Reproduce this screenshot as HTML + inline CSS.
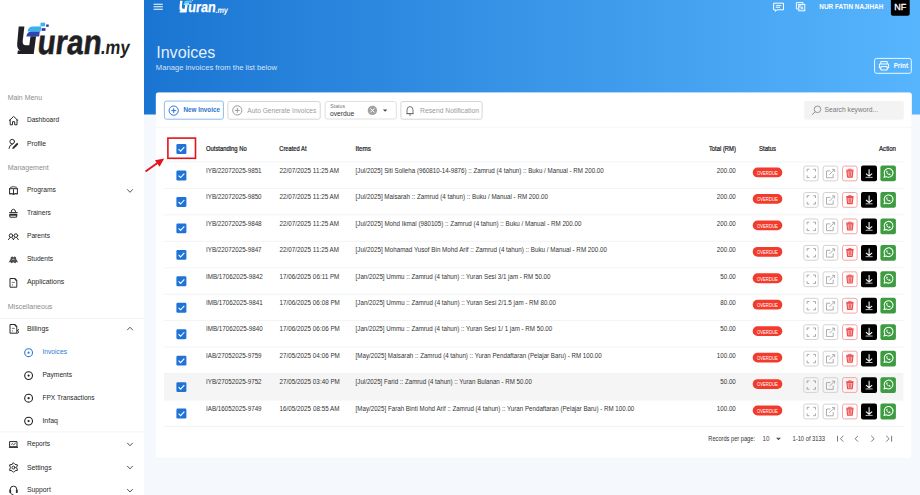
<!DOCTYPE html>
<html><head><meta charset="utf-8"><title>Invoices</title>
<style>
html,body{margin:0;padding:0}
body{width:920px;height:495px;overflow:hidden;position:relative;background:#f5f9fe;font-family:"Liberation Sans",sans-serif}
svg{position:absolute;left:0;top:0;display:block}
svg text{font-family:"Liberation Sans",sans-serif}
</style></head><body>
<svg width="920" height="495" viewBox="0 0 920 495">
<defs><linearGradient id="hg" x1="0" y1="0" x2="1" y2="0"><stop offset="0" stop-color="#1a75d2"/><stop offset="1" stop-color="#56b5fd"/></linearGradient></defs>
<rect x="0.00" y="0.00" width="144.00" height="495.00" rx="0" fill="#fff" /><rect x="144.00" y="0.00" width="776.00" height="114.50" rx="0" fill="url(#hg)" /><rect x="155.80" y="92.60" width="756.00" height="365.60" rx="2.4" fill="#f0f3f7" /><rect x="156.00" y="92.80" width="755.50" height="365.20" rx="2.2" fill="#fff" /><rect x="0.00" y="318.00" width="144.00" height="0.80" rx="0" fill="#f2f2f2" /><rect x="0.00" y="431.50" width="144.00" height="0.80" rx="0" fill="#f2f2f2" /><rect x="890.90" y="-3.00" width="18.80" height="18.80" rx="2" fill="#000" /><rect x="874.60" y="58.40" width="36.70" height="14.90" rx="2" fill="none" stroke="rgba(255,255,255,0.9)" stroke-width="1" /><rect x="164.40" y="101.10" width="59.00" height="18.10" rx="2" fill="none" stroke="#8bbcec" stroke-width="1" /><rect x="227.90" y="101.50" width="92.30" height="17.70" rx="2" fill="none" stroke="#d6d6d6" stroke-width="1" /><rect x="325.10" y="101.50" width="71.20" height="17.50" rx="2" fill="none" stroke="#e0e0e0" stroke-width="1" /><rect x="400.90" y="101.50" width="81.20" height="17.70" rx="2" fill="none" stroke="#d6d6d6" stroke-width="1" /><rect x="804.20" y="101.00" width="99.60" height="18.70" rx="2" fill="#f3f3f3" /><rect x="156.00" y="126.80" width="755.50" height="0.80" rx="0" fill="#f4f4f4" /><rect x="167.90" y="138.10" width="27.60" height="20.20" rx="0" fill="none" stroke="#e5121a" stroke-width="1.6" /><rect x="164.00" y="161.50" width="739.40" height="0.90" rx="0" fill="#f0f2f5" /><rect x="752.70" y="167.55" width="29.60" height="9.80" rx="4.9" fill="#f23b2c" /><rect x="803.80" y="166.05" width="14.40" height="14.80" rx="2" fill="none" stroke="#d3d3d3" stroke-width="1" /><rect x="823.10" y="166.05" width="14.70" height="14.80" rx="2" fill="none" stroke="#d3d3d3" stroke-width="1" /><rect x="842.50" y="166.05" width="14.60" height="14.80" rx="2" fill="none" stroke="#f6a5a5" stroke-width="1" /><rect x="861.00" y="165.55" width="16.00" height="15.80" rx="2" fill="#000" /><rect x="880.40" y="165.55" width="15.50" height="15.80" rx="2" fill="#3d9b40" /><rect x="164.00" y="187.95" width="739.40" height="0.90" rx="0" fill="#f0f2f5" /><rect x="752.70" y="194.00" width="29.60" height="9.80" rx="4.9" fill="#f23b2c" /><rect x="803.80" y="192.50" width="14.40" height="14.80" rx="2" fill="none" stroke="#d3d3d3" stroke-width="1" /><rect x="823.10" y="192.50" width="14.70" height="14.80" rx="2" fill="none" stroke="#d3d3d3" stroke-width="1" /><rect x="842.50" y="192.50" width="14.60" height="14.80" rx="2" fill="none" stroke="#f6a5a5" stroke-width="1" /><rect x="861.00" y="192.00" width="16.00" height="15.80" rx="2" fill="#000" /><rect x="880.40" y="192.00" width="15.50" height="15.80" rx="2" fill="#3d9b40" /><rect x="164.00" y="214.40" width="739.40" height="0.90" rx="0" fill="#f0f2f5" /><rect x="752.70" y="220.45" width="29.60" height="9.80" rx="4.9" fill="#f23b2c" /><rect x="803.80" y="218.95" width="14.40" height="14.80" rx="2" fill="none" stroke="#d3d3d3" stroke-width="1" /><rect x="823.10" y="218.95" width="14.70" height="14.80" rx="2" fill="none" stroke="#d3d3d3" stroke-width="1" /><rect x="842.50" y="218.95" width="14.60" height="14.80" rx="2" fill="none" stroke="#f6a5a5" stroke-width="1" /><rect x="861.00" y="218.45" width="16.00" height="15.80" rx="2" fill="#000" /><rect x="880.40" y="218.45" width="15.50" height="15.80" rx="2" fill="#3d9b40" /><rect x="164.00" y="240.85" width="739.40" height="0.90" rx="0" fill="#f0f2f5" /><rect x="752.70" y="246.90" width="29.60" height="9.80" rx="4.9" fill="#f23b2c" /><rect x="803.80" y="245.40" width="14.40" height="14.80" rx="2" fill="none" stroke="#d3d3d3" stroke-width="1" /><rect x="823.10" y="245.40" width="14.70" height="14.80" rx="2" fill="none" stroke="#d3d3d3" stroke-width="1" /><rect x="842.50" y="245.40" width="14.60" height="14.80" rx="2" fill="none" stroke="#f6a5a5" stroke-width="1" /><rect x="861.00" y="244.90" width="16.00" height="15.80" rx="2" fill="#000" /><rect x="880.40" y="244.90" width="15.50" height="15.80" rx="2" fill="#3d9b40" /><rect x="164.00" y="267.30" width="739.40" height="0.90" rx="0" fill="#f0f2f5" /><rect x="752.70" y="273.35" width="29.60" height="9.80" rx="4.9" fill="#f23b2c" /><rect x="803.80" y="271.85" width="14.40" height="14.80" rx="2" fill="none" stroke="#d3d3d3" stroke-width="1" /><rect x="823.10" y="271.85" width="14.70" height="14.80" rx="2" fill="none" stroke="#d3d3d3" stroke-width="1" /><rect x="842.50" y="271.85" width="14.60" height="14.80" rx="2" fill="none" stroke="#f6a5a5" stroke-width="1" /><rect x="861.00" y="271.35" width="16.00" height="15.80" rx="2" fill="#000" /><rect x="880.40" y="271.35" width="15.50" height="15.80" rx="2" fill="#3d9b40" /><rect x="164.00" y="293.75" width="739.40" height="0.90" rx="0" fill="#f0f2f5" /><rect x="752.70" y="299.80" width="29.60" height="9.80" rx="4.9" fill="#f23b2c" /><rect x="803.80" y="298.30" width="14.40" height="14.80" rx="2" fill="none" stroke="#d3d3d3" stroke-width="1" /><rect x="823.10" y="298.30" width="14.70" height="14.80" rx="2" fill="none" stroke="#d3d3d3" stroke-width="1" /><rect x="842.50" y="298.30" width="14.60" height="14.80" rx="2" fill="none" stroke="#f6a5a5" stroke-width="1" /><rect x="861.00" y="297.80" width="16.00" height="15.80" rx="2" fill="#000" /><rect x="880.40" y="297.80" width="15.50" height="15.80" rx="2" fill="#3d9b40" /><rect x="164.00" y="320.20" width="739.40" height="0.90" rx="0" fill="#f0f2f5" /><rect x="752.70" y="326.25" width="29.60" height="9.80" rx="4.9" fill="#f23b2c" /><rect x="803.80" y="324.75" width="14.40" height="14.80" rx="2" fill="none" stroke="#d3d3d3" stroke-width="1" /><rect x="823.10" y="324.75" width="14.70" height="14.80" rx="2" fill="none" stroke="#d3d3d3" stroke-width="1" /><rect x="842.50" y="324.75" width="14.60" height="14.80" rx="2" fill="none" stroke="#f6a5a5" stroke-width="1" /><rect x="861.00" y="324.25" width="16.00" height="15.80" rx="2" fill="#000" /><rect x="880.40" y="324.25" width="15.50" height="15.80" rx="2" fill="#3d9b40" /><rect x="164.00" y="346.65" width="739.40" height="0.90" rx="0" fill="#f0f2f5" /><rect x="752.70" y="352.70" width="29.60" height="9.80" rx="4.9" fill="#f23b2c" /><rect x="803.80" y="351.20" width="14.40" height="14.80" rx="2" fill="none" stroke="#d3d3d3" stroke-width="1" /><rect x="823.10" y="351.20" width="14.70" height="14.80" rx="2" fill="none" stroke="#d3d3d3" stroke-width="1" /><rect x="842.50" y="351.20" width="14.60" height="14.80" rx="2" fill="none" stroke="#f6a5a5" stroke-width="1" /><rect x="861.00" y="350.70" width="16.00" height="15.80" rx="2" fill="#000" /><rect x="880.40" y="350.70" width="15.50" height="15.80" rx="2" fill="#3d9b40" /><rect x="164.00" y="373.10" width="739.40" height="0.90" rx="0" fill="#f0f2f5" /><rect x="164.00" y="374.05" width="739.40" height="25.55" rx="0" fill="#f5f5f5" /><rect x="752.70" y="379.15" width="29.60" height="9.80" rx="4.9" fill="#f23b2c" /><rect x="803.80" y="377.65" width="14.40" height="14.80" rx="2" fill="none" stroke="#d3d3d3" stroke-width="1" /><rect x="823.10" y="377.65" width="14.70" height="14.80" rx="2" fill="none" stroke="#d3d3d3" stroke-width="1" /><rect x="842.50" y="377.65" width="14.60" height="14.80" rx="2" fill="none" stroke="#f6a5a5" stroke-width="1" /><rect x="861.00" y="377.15" width="16.00" height="15.80" rx="2" fill="#000" /><rect x="880.40" y="377.15" width="15.50" height="15.80" rx="2" fill="#3d9b40" /><rect x="164.00" y="399.55" width="739.40" height="0.90" rx="0" fill="#f0f2f5" /><rect x="752.70" y="405.60" width="29.60" height="9.80" rx="4.9" fill="#f23b2c" /><rect x="803.80" y="404.10" width="14.40" height="14.80" rx="2" fill="none" stroke="#d3d3d3" stroke-width="1" /><rect x="823.10" y="404.10" width="14.70" height="14.80" rx="2" fill="none" stroke="#d3d3d3" stroke-width="1" /><rect x="842.50" y="404.10" width="14.60" height="14.80" rx="2" fill="none" stroke="#f6a5a5" stroke-width="1" /><rect x="861.00" y="403.60" width="16.00" height="15.80" rx="2" fill="#000" /><rect x="880.40" y="403.60" width="15.50" height="15.80" rx="2" fill="#3d9b40" /><rect x="164.00" y="426.00" width="739.40" height="0.90" rx="0" fill="#f0f2f5" />
<g transform="translate(0,0) scale(1)"><path d="M18.7 26.4 H24.4 L22.7 41 Q22.3 45.2 25.8 45.2 H29.3 L30.5 36.2 H36.1 L33.7 54 H17.4 L17.9 50.6 H20.6 Q16.7 49.3 17.2 43.4 Z" fill="#1f1f24"/><g transform="translate(0,54) skewX(-7) translate(0,-54)"><text x="36.4" y="53.7" font-size="34.3" font-weight="bold" fill="#1f1f24" stroke="#1f1f24" stroke-width="0.6" textLength="64" lengthAdjust="spacingAndGlyphs">uran</text><text x="100.2" y="54" font-size="19.6" font-weight="bold" fill="#1f1f24" textLength="29" lengthAdjust="spacingAndGlyphs">.my</text></g><path d="M27.6 31.5 Q28.2 26.4 33 26.4 H41.3 L40.6 31.5 Z" fill="#35b4f0"/><path d="M26.4 36.5 Q27 31.6 31.6 31.6 H39.8 L39.1 36.5 Z" fill="#2e45b0"/><rect x="40.5" y="22.7" width="4.6" height="3.6" fill="#35b4f0"/><rect x="41.6" y="28.2" width="3.9" height="2.6" fill="#25329a"/><rect x="46.2" y="24.5" width="2.5" height="2.3" fill="#25329a"/></g><text x="7.7" y="100" font-size="7.4" fill="#8c8c8c" textLength="34.3" lengthAdjust="spacingAndGlyphs" >Main Menu</text><text x="7.7" y="170" font-size="7.4" fill="#8c8c8c" textLength="41.0" lengthAdjust="spacingAndGlyphs" >Management</text><text x="7.7" y="309" font-size="7.4" fill="#8c8c8c" textLength="44.7" lengthAdjust="spacingAndGlyphs" >Miscellaneous</text><text x="26.9" y="122" font-size="7.4" fill="#272727" textLength="32.2" lengthAdjust="spacingAndGlyphs" >Dashboard</text><text x="26.9" y="146" font-size="7.4" fill="#272727" textLength="19.1" lengthAdjust="spacingAndGlyphs" >Profile</text><text x="26.9" y="192" font-size="7.4" fill="#272727" textLength="29.1" lengthAdjust="spacingAndGlyphs" >Programs</text><text x="26.9" y="215" font-size="7.4" fill="#272727" textLength="24.0" lengthAdjust="spacingAndGlyphs" >Trainers</text><text x="26.9" y="238" font-size="7.4" fill="#272727" textLength="23.2" lengthAdjust="spacingAndGlyphs" >Parents</text><text x="26.9" y="261" font-size="7.4" fill="#272727" textLength="26.3" lengthAdjust="spacingAndGlyphs" >Students</text><text x="26.9" y="284" font-size="7.4" fill="#272727" textLength="37.3" lengthAdjust="spacingAndGlyphs" >Applications</text><text x="26.9" y="331" font-size="7.4" fill="#272727" textLength="21.8" lengthAdjust="spacingAndGlyphs" >Billings</text><text x="26.9" y="446" font-size="7.4" fill="#272727" textLength="23.3" lengthAdjust="spacingAndGlyphs" >Reports</text><text x="26.9" y="470" font-size="7.4" fill="#272727" textLength="24.7" lengthAdjust="spacingAndGlyphs" >Settings</text><text x="26.9" y="492" font-size="7.4" fill="#272727" textLength="23.9" lengthAdjust="spacingAndGlyphs" >Support</text><text x="42.4" y="354" font-size="7.4" fill="#2d7ad6" textLength="24.6" lengthAdjust="spacingAndGlyphs" >Invoices</text><text x="42.4" y="377" font-size="7.4" fill="#272727" textLength="29.6" lengthAdjust="spacingAndGlyphs" >Payments</text><text x="42.4" y="400" font-size="7.4" fill="#272727" textLength="52.2" lengthAdjust="spacingAndGlyphs" >FPX Transactions</text><text x="42.4" y="423" font-size="7.4" fill="#272727" textLength="15.5" lengthAdjust="spacingAndGlyphs" >Infaq</text><circle cx="28.6" cy="352.7" r="3.9" fill="none" stroke="#2d7ad6" stroke-width="1.1"/><circle cx="28.6" cy="352.7" r="1.1" fill="#2d7ad6"/><circle cx="28.6" cy="375.6" r="3.9" fill="none" stroke="#222" stroke-width="1.1"/><circle cx="28.6" cy="375.6" r="1.1" fill="#222"/><circle cx="28.6" cy="398.2" r="3.9" fill="none" stroke="#222" stroke-width="1.1"/><circle cx="28.6" cy="398.2" r="1.1" fill="#222"/><circle cx="28.6" cy="421.1" r="3.9" fill="none" stroke="#222" stroke-width="1.1"/><circle cx="28.6" cy="421.1" r="1.1" fill="#222"/><path d="M127.2 189.3 L130 192.3 L132.8 189.3" fill="none" stroke="#555" stroke-width="1"/><path d="M127.2 330.2 L130 327.2 L132.8 330.2" fill="none" stroke="#555" stroke-width="1"/><path d="M127.2 442.8 L130 445.8 L132.8 442.8" fill="none" stroke="#555" stroke-width="1"/><path d="M127.2 465.9 L130 468.9 L132.8 465.9" fill="none" stroke="#555" stroke-width="1"/><path d="M127.2 489.0 L130 492.0 L132.8 489.0" fill="none" stroke="#555" stroke-width="1"/><path d="M9.3 120.5 L13.6 116.4 L17.9 120.5 M10.2 119.8 V124.8 H12.5 V121.7 H14.7 V124.8 H17 V119.8" stroke="#2b2b2b" stroke-width="1" fill="none" stroke-linejoin="round" stroke-linecap="round"/><circle cx="12.2" cy="141.6" r="2.3" stroke="#2b2b2b" stroke-width="1" fill="none" stroke-linejoin="round" stroke-linecap="round"/><path d="M9 148.4 Q9.4 144.6 12.4 144.2" stroke="#2b2b2b" stroke-width="1" fill="none" stroke-linejoin="round" stroke-linecap="round"/><path d="M13.4 147.8 L17.2 144" stroke="#2b2b2b" stroke-width="1.9" stroke-linecap="round"/><path d="M12.6 148.6 L13.2 147.9" stroke="#2b2b2b" stroke-width="0.8"/><path d="M9.6 188.7 H17.4 M9.6 188.7 V193.9 M17.4 188.7 V193.9 M13.5 189.6 V194.2" stroke="#2b2b2b" stroke-width="1" fill="none" stroke-linejoin="round" stroke-linecap="round"/><path d="M10.2 187.4 Q13.5 185.9 16.8 187.4" stroke="#2b2b2b" stroke-width="0.9" fill="none"/><path d="M9.6 193.9 Q11.6 193.1 13.5 194.3 Q15.4 193.1 17.4 193.9" stroke="#2b2b2b" stroke-width="1.3" fill="none"/><path d="M11.2 211.9 Q11.3 209.3 13.4 209.3 Q15.5 209.3 15.6 211.9" stroke="#2b2b2b" stroke-width="1" fill="none" stroke-linejoin="round" stroke-linecap="round"/><path d="M9.3 212.7 H17.6" stroke="#2b2b2b" stroke-width="1.2"/><path d="M9.9 214.5 H17 L16.5 217.2 H10.4 Z" stroke="#2b2b2b" stroke-width="1" fill="none" stroke-linejoin="round" stroke-linecap="round"/><path d="M10 215.2 H17" stroke="#2b2b2b" stroke-width="1"/><circle cx="11" cy="235.6" r="1.8" stroke="#2b2b2b" stroke-width="1" fill="none" stroke-linejoin="round" stroke-linecap="round"/><circle cx="15.9" cy="235.6" r="1.8" stroke="#2b2b2b" stroke-width="1" fill="none" stroke-linejoin="round" stroke-linecap="round"/><path d="M8.5 239.6 L10 237.6 M13.4 239.6 L12.2 237.7 M13.4 239.6 L14.7 237.7 M18.3 239.6 L16.8 237.6" stroke="#2b2b2b" stroke-width="1" fill="none" stroke-linejoin="round" stroke-linecap="round"/><path d="M8.6 262.4 L10.4 259.4 L11 257 L12.6 256.4 L13.4 257.6 L14.2 256.4 L15.8 257 L16.4 259.4 L18.2 262.4 L16.4 262 L15.4 263.2 L13.4 262.2 L11.4 263.2 L10.4 262 Z" fill="#2b2b2b" opacity="0.85"/><path d="M12.2 260.2 L13.4 258.8 L14.6 260.2" stroke="#fff" stroke-width="0.7" fill="none"/><path d="M10.4 278.5 H14.8 L16.8 280.6 V287.2 H10.4 Z" stroke="#2b2b2b" stroke-width="1" fill="none" stroke-linejoin="round" stroke-linecap="round"/><path d="M14.6 278.6 L16.7 280.7" stroke="#2b2b2b" stroke-width="1.4"/><path d="M11.9 282.4 H14.8 M12.4 284.3 V285.6" stroke="#555" stroke-width="0.8"/><path d="M10.4 324.5 H14.8 L16.8 326.6 V333.2 H10.4 Z" stroke="#2b2b2b" stroke-width="1" fill="none" stroke-linejoin="round" stroke-linecap="round"/><path d="M14.6 324.6 L16.7 326.7" stroke="#2b2b2b" stroke-width="1.4"/><path d="M11.9 328.4 H14.8 M12.4 330.3 V331.6" stroke="#555" stroke-width="0.8"/><path d="M19 329.4 L17.2 330.6 L18.8 332 L17.4 333.6" stroke="#2b2b2b" stroke-width="1" fill="none"/><path d="M10 441.6 H17 V446.8 H10 Z" stroke="#2b2b2b" stroke-width="1" fill="none" stroke-linejoin="round" stroke-linecap="round"/><path d="M8.9 447.3 H18" stroke="#2b2b2b" stroke-width="1.2"/><path d="M11.2 444.6 L12.6 443.6 L13.6 444.8 L15.8 443" stroke="#2b2b2b" stroke-width="0.8" fill="none"/><path d="M13.5 462.9 L15 464.4 L17.5 464.9 L16.6 467.6 L17.5 470.3 L15 470.8 L13.5 472.3 L12 470.8 L9.5 470.3 L10.4 467.6 L9.5 464.9 L12 464.4 Z" stroke="#2b2b2b" stroke-width="1" fill="none" stroke-linejoin="round" stroke-linecap="round"/><circle cx="13.5" cy="467.6" r="1.5" stroke="#2b2b2b" stroke-width="1" fill="none" stroke-linejoin="round" stroke-linecap="round"/><path d="M10.2 491.5 V489.6 Q10.2 486.1 13.5 486.1 Q16.8 486.1 16.8 489.6 V491.5" stroke="#2b2b2b" stroke-width="1" fill="none" stroke-linejoin="round" stroke-linecap="round"/><rect x="9.4" y="489.6" width="1.7" height="3.3" rx="0.5" fill="#2b2b2b"/><rect x="15.9" y="489.6" width="1.7" height="3.3" rx="0.5" fill="#2b2b2b"/><path d="M10.6 492.9 Q11 494.6 13.4 494.6" stroke="#2b2b2b" stroke-width="0.9" fill="none"/><path d="M153.6 4.3 H162.8 M153.6 6.8 H162.8 M153.6 9.3 H162.8" stroke="#fff" stroke-width="1.1"/><g transform="translate(172.07,-10.7) scale(0.43)"><path d="M18.7 26.4 H24.4 L22.7 41 Q22.3 45.2 25.8 45.2 H29.3 L30.5 36.2 H36.1 L33.7 54 H17.4 L17.9 50.6 H20.6 Q16.7 49.3 17.2 43.4 Z" fill="#ffffff"/><g transform="translate(0,54) skewX(-7) translate(0,-54)"><text x="36.4" y="53.7" font-size="34.3" font-weight="bold" fill="#ffffff" stroke="#ffffff" stroke-width="0.6" textLength="64" lengthAdjust="spacingAndGlyphs">uran</text><text x="100.2" y="54" font-size="19.6" font-weight="bold" fill="#ffffff" textLength="29" lengthAdjust="spacingAndGlyphs">.my</text></g><path d="M27.6 31.5 Q28.2 26.4 33 26.4 H41.3 L40.6 31.5 Z" fill="#5fd0f7"/><path d="M26.4 36.5 Q27 31.6 31.6 31.6 H39.8 L39.1 36.5 Z" fill="#9fe0ff"/><rect x="40.5" y="22.7" width="4.6" height="3.6" fill="#5fd0f7"/><rect x="41.6" y="28.2" width="3.9" height="2.6" fill="#bfe8ff"/><rect x="46.2" y="24.5" width="2.5" height="2.3" fill="#bfe8ff"/></g><text x="156.2" y="57.8" font-size="16.2" fill="rgba(255,255,255,0.9)" textLength="59.1" lengthAdjust="spacingAndGlyphs" >Invoices</text><text x="155.8" y="70.3" font-size="7.6" fill="rgba(255,255,255,0.82)" textLength="121.2" lengthAdjust="spacingAndGlyphs" >Manage invoices from the list below</text><path d="M773.6 3.2 H783.5 V9.8 H777 L775.4 11.4 V9.8 H773.6 Z" fill="none" stroke="#fff" stroke-width="1"/><path d="M775.8 5.6 H781.3 M775.8 7.3 H780" stroke="#fff" stroke-width="0.9"/><path d="M803 4.4 V2.6 H796.4 V9 H798.6" fill="none" stroke="#fff" stroke-width="0.95"/><rect x="798.8" y="4.5" width="6" height="6.3" fill="none" stroke="#fff" stroke-width="0.95"/><path d="M797.8 4.6 H801.6 M799.7 3.9 V4.6 M801 4.8 Q800.2 7 798 7.8 M798.6 5.2 Q799.8 7.2 801.4 7.6" stroke="#fff" stroke-width="0.6" fill="none"/><path d="M800.9 9.6 L802 6.4 L803.1 9.6 M801.3 8.6 H802.7" stroke="#fff" stroke-width="0.7" fill="none"/><text x="819.3" y="8.95" font-size="6.6" fill="#ffffff" font-weight="bold" textLength="64" lengthAdjust="spacingAndGlyphs" >NUR FATIN NAJIHAH</text><text x="894.3" y="10.1" font-size="9.4" fill="#ffffff" textLength="12" lengthAdjust="spacingAndGlyphs" stroke="#fff" stroke-width="0.3">NF</text><path d="M880.8 64 V61.6 H887.2 V64 M879.4 64 H888.6 V68 H887.2 M880.8 68 H879.4 V64 M880.8 66.6 H887.2 V70 H880.8 Z" fill="none" stroke="#fff" stroke-width="1" stroke-linejoin="round"/><text x="893.7" y="67.9" font-size="6.6" fill="#ffffff" font-weight="bold" textLength="14.3" lengthAdjust="spacingAndGlyphs" >Print</text><circle cx="173.7" cy="110.6" r="4.6" fill="none" stroke="#2b73cf" stroke-width="1"/><path d="M171.3 110.6 H176.1 M173.7 108.2 V113" stroke="#2b73cf" stroke-width="1"/><text x="183.5" y="112.4" font-size="6.6" fill="#2b73cf" font-weight="bold" textLength="36.5" lengthAdjust="spacingAndGlyphs" >New Invoice</text><circle cx="237.3" cy="110.4" r="4.6" fill="none" stroke="#9a9a9a" stroke-width="1"/><path d="M234.9 110.4 H239.7 M237.3 108 V112.8" stroke="#9a9a9a" stroke-width="1"/><text x="247.3" y="112.6" font-size="6.6" fill="#9b9b9b" textLength="69" lengthAdjust="spacingAndGlyphs" >Auto Generate Invoices</text><text x="330.3" y="108" font-size="4.9" fill="#777" textLength="14.7" lengthAdjust="spacingAndGlyphs" >Status</text><text x="330" y="115.8" font-size="6.8" fill="#333" textLength="24.2" lengthAdjust="spacingAndGlyphs" >overdue</text><circle cx="372.4" cy="110.4" r="4.7" fill="#a3a3a3"/><path d="M370.5 108.5 L374.3 112.3 M374.3 108.5 L370.5 112.3" stroke="#fff" stroke-width="1"/><path d="M382.9 109.6 H387.3 L385.1 111.8 Z" fill="#444"/><path d="M407 113.6 V110 Q407 106.6 410 106.6 Q413 106.6 413 110 V113.6 Z M406.3 113.6 H413.7 M409 115 H411" fill="none" stroke="#666" stroke-width="0.9" stroke-linejoin="round"/><text x="420" y="112.7" font-size="6.6" fill="#9b9b9b" textLength="59" lengthAdjust="spacingAndGlyphs" >Resend Notification</text><circle cx="817.5" cy="109.3" r="3.3" fill="none" stroke="#8a8a8a" stroke-width="0.9"/><path d="M815.2 111.7 L811.9 114.9" stroke="#8a8a8a" stroke-width="1"/><text x="824.5" y="112.2" font-size="6.6" fill="#7a7a7a" textLength="53.5" lengthAdjust="spacingAndGlyphs" >Search keyword...</text><rect x="176.4" y="144.1" width="10" height="9.9" rx="1.3" fill="#1f73d6"/><path d="M178.6 149.1 L180.6 151.1 L184.3 147.1" fill="none" stroke="#fff" stroke-width="1.1"/><text x="206" y="151.2" font-size="6.7" fill="#222" textLength="40.7" lengthAdjust="spacingAndGlyphs" stroke="#222" stroke-width="0.22">Outstanding No</text><text x="279.3" y="151.2" font-size="6.7" fill="#222" textLength="27.2" lengthAdjust="spacingAndGlyphs" stroke="#222" stroke-width="0.22">Created At</text><text x="355.6" y="151.2" font-size="6.7" fill="#222" textLength="15.4" lengthAdjust="spacingAndGlyphs" stroke="#222" stroke-width="0.22">Items</text><text x="708.9" y="151.2" font-size="6.7" fill="#222" textLength="27" lengthAdjust="spacingAndGlyphs" stroke="#222" stroke-width="0.22">Total (RM)</text><text x="759" y="151.2" font-size="6.7" fill="#222" textLength="17" lengthAdjust="spacingAndGlyphs" stroke="#222" stroke-width="0.22">Status</text><text x="879" y="151.2" font-size="6.7" fill="#222" textLength="17" lengthAdjust="spacingAndGlyphs" stroke="#222" stroke-width="0.22">Action</text><path d="M145.5 171.6 L158.5 162.3" stroke="#e3141b" stroke-width="1.9"/><path d="M164.2 158.6 L155 160.2 L159.6 166.8 Z" fill="#e3141b"/><rect x="176.4" y="170.54999999999998" width="10" height="9.9" rx="1.3" fill="#1f73d6"/><path d="M178.6 175.54999999999998 L180.6 177.54999999999998 L184.3 173.54999999999998" fill="none" stroke="#fff" stroke-width="1.1"/><text x="206" y="172.75" font-size="6.9" fill="#333" textLength="55.6" lengthAdjust="spacingAndGlyphs" >IYB/22072025-9851</text><text x="279.6" y="172.75" font-size="6.9" fill="#333" textLength="59.43" lengthAdjust="spacingAndGlyphs" >22/07/2025 11:25 AM</text><text x="355.6" y="172.75" font-size="6.9" fill="#333" textLength="248.1" lengthAdjust="spacingAndGlyphs" >[Jul/2025] Siti Solleha (960810-14-9876) :: Zamrud (4 tahun) :: Buku / Manual - RM 200.00</text><text x="735.8" y="172.75" font-size="6.9" fill="#333" textLength="18.96" lengthAdjust="spacingAndGlyphs" text-anchor="end" >200.00</text><text x="767.4" y="175" font-size="4.9" fill="#fff" textLength="20.9" lengthAdjust="spacingAndGlyphs" text-anchor="middle" >OVERDUE</text><path d="M807.1 171.54999999999998 V169.24999999999997 H809.4 M813.2 169.24999999999997 H815.5 V171.54999999999998 M815.5 175.34999999999997 V177.64999999999998 H813.2 M809.4 177.64999999999998 H807.1 V175.34999999999997" fill="none" stroke="#9a9a9a" stroke-width="0.85"/><path d="M830.4 170.95 H826.5 V177.74999999999997 H833.2 V173.95" fill="none" stroke="#a0a0a0" stroke-width="0.85"/><path d="M829.4 174.64999999999998 L834.4 169.64999999999998" stroke="#a0a0a0" stroke-width="0.85"/><path d="M832 169.45 H834.6 V172.04999999999998" fill="none" stroke="#a0a0a0" stroke-width="0.85"/><path d="M846.2 170.14999999999998 H853.6" stroke="#f04848" stroke-width="1"/><path d="M848.6 169.95 V169.14999999999998 H851.2 V169.95" fill="none" stroke="#f04848" stroke-width="0.8"/><path d="M846.9 170.95 L847.6 177.14999999999998 H852.2 L852.9 170.95 Z" fill="#fbb0b0" stroke="#f04848" stroke-width="1.1" stroke-linejoin="round"/><rect x="848.7" y="171.95" width="2.4" height="4.2" fill="#f47070"/><path d="M869.1 169.14999999999998 V175.95 M866 173.54999999999998 L869.1 176.14999999999998 L872.2 173.54999999999998" fill="none" stroke="#fff" stroke-width="1.05"/><path d="M865.6 177.35 H872.6" stroke="#e8e8e8" stroke-width="0.8"/><path d="M884.0 177.35 L884.8000000000001 175.14999999999998 A4.4 4.4 0 1 1 886.3000000000001 176.64999999999998 Z" fill="none" stroke="#fff" stroke-width="1.05" stroke-linejoin="round"/><path d="M886.2 171.24999999999997 Q886.4000000000001 174.95 890.3000000000001 175.14999999999998 L890.5 174.04999999999998 L889.3000000000001 173.45 L888.7 174.04999999999998 Q887.5 173.45 887.1 172.35 L887.7 171.85 L887.2 170.74999999999997 Z" fill="#fff"/><rect x="176.4" y="196.99999999999997" width="10" height="9.9" rx="1.3" fill="#1f73d6"/><path d="M178.6 201.99999999999997 L180.6 203.99999999999997 L184.3 199.99999999999997" fill="none" stroke="#fff" stroke-width="1.1"/><text x="206" y="199.2" font-size="6.9" fill="#333" textLength="55.6" lengthAdjust="spacingAndGlyphs" >IYB/22072025-9850</text><text x="279.6" y="199.2" font-size="6.9" fill="#333" textLength="59.43" lengthAdjust="spacingAndGlyphs" >22/07/2025 11:25 AM</text><text x="355.6" y="199.2" font-size="6.9" fill="#333" textLength="192.3" lengthAdjust="spacingAndGlyphs" >[Jul/2025] Maisarah :: Zamrud (4 tahun) :: Buku / Manual - RM 200.00</text><text x="735.8" y="199.2" font-size="6.9" fill="#333" textLength="18.96" lengthAdjust="spacingAndGlyphs" text-anchor="end" >200.00</text><text x="767.4" y="201" font-size="4.9" fill="#fff" textLength="20.9" lengthAdjust="spacingAndGlyphs" text-anchor="middle" >OVERDUE</text><path d="M807.1 197.99999999999997 V195.69999999999996 H809.4 M813.2 195.69999999999996 H815.5 V197.99999999999997 M815.5 201.79999999999995 V204.09999999999997 H813.2 M809.4 204.09999999999997 H807.1 V201.79999999999995" fill="none" stroke="#9a9a9a" stroke-width="0.85"/><path d="M830.4 197.39999999999998 H826.5 V204.19999999999996 H833.2 V200.39999999999998" fill="none" stroke="#a0a0a0" stroke-width="0.85"/><path d="M829.4 201.09999999999997 L834.4 196.09999999999997" stroke="#a0a0a0" stroke-width="0.85"/><path d="M832 195.89999999999998 H834.6 V198.49999999999997" fill="none" stroke="#a0a0a0" stroke-width="0.85"/><path d="M846.2 196.59999999999997 H853.6" stroke="#f04848" stroke-width="1"/><path d="M848.6 196.39999999999998 V195.59999999999997 H851.2 V196.39999999999998" fill="none" stroke="#f04848" stroke-width="0.8"/><path d="M846.9 197.39999999999998 L847.6 203.59999999999997 H852.2 L852.9 197.39999999999998 Z" fill="#fbb0b0" stroke="#f04848" stroke-width="1.1" stroke-linejoin="round"/><rect x="848.7" y="198.39999999999998" width="2.4" height="4.2" fill="#f47070"/><path d="M869.1 195.59999999999997 V202.39999999999998 M866 199.99999999999997 L869.1 202.59999999999997 L872.2 199.99999999999997" fill="none" stroke="#fff" stroke-width="1.05"/><path d="M865.6 203.79999999999998 H872.6" stroke="#e8e8e8" stroke-width="0.8"/><path d="M884.0 203.79999999999998 L884.8000000000001 201.59999999999997 A4.4 4.4 0 1 1 886.3000000000001 203.09999999999997 Z" fill="none" stroke="#fff" stroke-width="1.05" stroke-linejoin="round"/><path d="M886.2 197.69999999999996 Q886.4000000000001 201.39999999999998 890.3000000000001 201.59999999999997 L890.5 200.49999999999997 L889.3000000000001 199.89999999999998 L888.7 200.49999999999997 Q887.5 199.89999999999998 887.1 198.79999999999998 L887.7 198.29999999999998 L887.2 197.19999999999996 Z" fill="#fff"/><rect x="176.4" y="223.45" width="10" height="9.9" rx="1.3" fill="#1f73d6"/><path d="M178.6 228.45 L180.6 230.45 L184.3 226.45" fill="none" stroke="#fff" stroke-width="1.1"/><text x="206" y="225.65" font-size="6.9" fill="#333" textLength="55.6" lengthAdjust="spacingAndGlyphs" >IYB/22072025-9848</text><text x="279.6" y="225.65" font-size="6.9" fill="#333" textLength="59.43" lengthAdjust="spacingAndGlyphs" >22/07/2025 11:25 AM</text><text x="355.6" y="225.65" font-size="6.9" fill="#333" textLength="225.9" lengthAdjust="spacingAndGlyphs" >[Jul/2025] Mohd Ikmal (980105) :: Zamrud (4 tahun) :: Buku / Manual - RM 200.00</text><text x="735.8" y="225.65" font-size="6.9" fill="#333" textLength="18.96" lengthAdjust="spacingAndGlyphs" text-anchor="end" >200.00</text><text x="767.4" y="228" font-size="4.9" fill="#fff" textLength="20.9" lengthAdjust="spacingAndGlyphs" text-anchor="middle" >OVERDUE</text><path d="M807.1 224.45 V222.14999999999998 H809.4 M813.2 222.14999999999998 H815.5 V224.45 M815.5 228.24999999999997 V230.54999999999998 H813.2 M809.4 230.54999999999998 H807.1 V228.24999999999997" fill="none" stroke="#9a9a9a" stroke-width="0.85"/><path d="M830.4 223.85 H826.5 V230.64999999999998 H833.2 V226.85" fill="none" stroke="#a0a0a0" stroke-width="0.85"/><path d="M829.4 227.54999999999998 L834.4 222.54999999999998" stroke="#a0a0a0" stroke-width="0.85"/><path d="M832 222.35 H834.6 V224.95" fill="none" stroke="#a0a0a0" stroke-width="0.85"/><path d="M846.2 223.04999999999998 H853.6" stroke="#f04848" stroke-width="1"/><path d="M848.6 222.85 V222.04999999999998 H851.2 V222.85" fill="none" stroke="#f04848" stroke-width="0.8"/><path d="M846.9 223.85 L847.6 230.04999999999998 H852.2 L852.9 223.85 Z" fill="#fbb0b0" stroke="#f04848" stroke-width="1.1" stroke-linejoin="round"/><rect x="848.7" y="224.85" width="2.4" height="4.2" fill="#f47070"/><path d="M869.1 222.04999999999998 V228.85 M866 226.45 L869.1 229.04999999999998 L872.2 226.45" fill="none" stroke="#fff" stroke-width="1.05"/><path d="M865.6 230.25 H872.6" stroke="#e8e8e8" stroke-width="0.8"/><path d="M884.0 230.25 L884.8000000000001 228.04999999999998 A4.4 4.4 0 1 1 886.3000000000001 229.54999999999998 Z" fill="none" stroke="#fff" stroke-width="1.05" stroke-linejoin="round"/><path d="M886.2 224.14999999999998 Q886.4000000000001 227.85 890.3000000000001 228.04999999999998 L890.5 226.95 L889.3000000000001 226.35 L888.7 226.95 Q887.5 226.35 887.1 225.25 L887.7 224.75 L887.2 223.64999999999998 Z" fill="#fff"/><rect x="176.4" y="249.89999999999998" width="10" height="9.9" rx="1.3" fill="#1f73d6"/><path d="M178.6 254.89999999999998 L180.6 256.9 L184.3 252.89999999999998" fill="none" stroke="#fff" stroke-width="1.1"/><text x="206" y="252.1" font-size="6.9" fill="#333" textLength="55.6" lengthAdjust="spacingAndGlyphs" >IYB/22072025-9847</text><text x="279.6" y="252.1" font-size="6.9" fill="#333" textLength="59.43" lengthAdjust="spacingAndGlyphs" >22/07/2025 11:25 AM</text><text x="355.6" y="252.1" font-size="6.9" fill="#333" textLength="251.4" lengthAdjust="spacingAndGlyphs" >[Jul/2025] Mohamad Yusof Bin Mohd Arif :: Zamrud (4 tahun) :: Buku / Manual - RM 200.00</text><text x="735.8" y="252.1" font-size="6.9" fill="#333" textLength="18.96" lengthAdjust="spacingAndGlyphs" text-anchor="end" >200.00</text><text x="767.4" y="254" font-size="4.9" fill="#fff" textLength="20.9" lengthAdjust="spacingAndGlyphs" text-anchor="middle" >OVERDUE</text><path d="M807.1 250.89999999999998 V248.59999999999997 H809.4 M813.2 248.59999999999997 H815.5 V250.89999999999998 M815.5 254.69999999999993 V256.99999999999994 H813.2 M809.4 256.99999999999994 H807.1 V254.69999999999993" fill="none" stroke="#9a9a9a" stroke-width="0.85"/><path d="M830.4 250.29999999999998 H826.5 V257.09999999999997 H833.2 V253.29999999999998" fill="none" stroke="#a0a0a0" stroke-width="0.85"/><path d="M829.4 253.99999999999997 L834.4 248.99999999999997" stroke="#a0a0a0" stroke-width="0.85"/><path d="M832 248.79999999999998 H834.6 V251.39999999999998" fill="none" stroke="#a0a0a0" stroke-width="0.85"/><path d="M846.2 249.49999999999997 H853.6" stroke="#f04848" stroke-width="1"/><path d="M848.6 249.29999999999998 V248.49999999999997 H851.2 V249.29999999999998" fill="none" stroke="#f04848" stroke-width="0.8"/><path d="M846.9 250.29999999999998 L847.6 256.5 H852.2 L852.9 250.29999999999998 Z" fill="#fbb0b0" stroke="#f04848" stroke-width="1.1" stroke-linejoin="round"/><rect x="848.7" y="251.29999999999998" width="2.4" height="4.2" fill="#f47070"/><path d="M869.1 248.49999999999997 V255.29999999999998 M866 252.89999999999998 L869.1 255.49999999999997 L872.2 252.89999999999998" fill="none" stroke="#fff" stroke-width="1.05"/><path d="M865.6 256.7 H872.6" stroke="#e8e8e8" stroke-width="0.8"/><path d="M884.0 256.7 L884.8000000000001 254.49999999999997 A4.4 4.4 0 1 1 886.3000000000001 255.99999999999997 Z" fill="none" stroke="#fff" stroke-width="1.05" stroke-linejoin="round"/><path d="M886.2 250.59999999999997 Q886.4000000000001 254.29999999999998 890.3000000000001 254.49999999999997 L890.5 253.39999999999998 L889.3000000000001 252.79999999999998 L888.7 253.39999999999998 Q887.5 252.79999999999998 887.1 251.7 L887.7 251.2 L887.2 250.09999999999997 Z" fill="#fff"/><rect x="176.4" y="276.35" width="10" height="9.9" rx="1.3" fill="#1f73d6"/><path d="M178.6 281.35 L180.6 283.35 L184.3 279.35" fill="none" stroke="#fff" stroke-width="1.1"/><text x="206" y="278.55" font-size="6.9" fill="#333" textLength="56.64" lengthAdjust="spacingAndGlyphs" >IMB/17062025-9842</text><text x="279.6" y="278.55" font-size="6.9" fill="#333" textLength="59.78" lengthAdjust="spacingAndGlyphs" >17/06/2025 06:11 PM</text><text x="355.6" y="278.55" font-size="6.9" fill="#333" textLength="194.9" lengthAdjust="spacingAndGlyphs" >[Jan/2025] Ummu :: Zamrud (4 tahun) :: Yuran Sesi 3/1 jam - RM 50.00</text><text x="735.8" y="278.55" font-size="6.9" fill="#333" textLength="15.52" lengthAdjust="spacingAndGlyphs" text-anchor="end" >50.00</text><text x="767.4" y="281" font-size="4.9" fill="#fff" textLength="20.9" lengthAdjust="spacingAndGlyphs" text-anchor="middle" >OVERDUE</text><path d="M807.1 277.35 V275.05 H809.4 M813.2 275.05 H815.5 V277.35 M815.5 281.15 V283.45 H813.2 M809.4 283.45 H807.1 V281.15" fill="none" stroke="#9a9a9a" stroke-width="0.85"/><path d="M830.4 276.75 H826.5 V283.55 H833.2 V279.75" fill="none" stroke="#a0a0a0" stroke-width="0.85"/><path d="M829.4 280.45000000000005 L834.4 275.45000000000005" stroke="#a0a0a0" stroke-width="0.85"/><path d="M832 275.25 H834.6 V277.85" fill="none" stroke="#a0a0a0" stroke-width="0.85"/><path d="M846.2 275.95000000000005 H853.6" stroke="#f04848" stroke-width="1"/><path d="M848.6 275.75 V274.95000000000005 H851.2 V275.75" fill="none" stroke="#f04848" stroke-width="0.8"/><path d="M846.9 276.75 L847.6 282.95000000000005 H852.2 L852.9 276.75 Z" fill="#fbb0b0" stroke="#f04848" stroke-width="1.1" stroke-linejoin="round"/><rect x="848.7" y="277.75" width="2.4" height="4.2" fill="#f47070"/><path d="M869.1 274.95000000000005 V281.75 M866 279.35 L869.1 281.95000000000005 L872.2 279.35" fill="none" stroke="#fff" stroke-width="1.05"/><path d="M865.6 283.15000000000003 H872.6" stroke="#e8e8e8" stroke-width="0.8"/><path d="M884.0 283.15000000000003 L884.8000000000001 280.95000000000005 A4.4 4.4 0 1 1 886.3000000000001 282.45000000000005 Z" fill="none" stroke="#fff" stroke-width="1.05" stroke-linejoin="round"/><path d="M886.2 277.05 Q886.4000000000001 280.75 890.3000000000001 280.95000000000005 L890.5 279.85 L889.3000000000001 279.25 L888.7 279.85 Q887.5 279.25 887.1 278.15000000000003 L887.7 277.65000000000003 L887.2 276.55 Z" fill="#fff"/><rect x="176.4" y="302.8" width="10" height="9.9" rx="1.3" fill="#1f73d6"/><path d="M178.6 307.8 L180.6 309.8 L184.3 305.8" fill="none" stroke="#fff" stroke-width="1.1"/><text x="206" y="305.0" font-size="6.9" fill="#333" textLength="56.64" lengthAdjust="spacingAndGlyphs" >IMB/17062025-9841</text><text x="279.6" y="305.0" font-size="6.9" fill="#333" textLength="60.25" lengthAdjust="spacingAndGlyphs" >17/06/2025 06:08 PM</text><text x="355.6" y="305.0" font-size="6.9" fill="#333" textLength="200.4" lengthAdjust="spacingAndGlyphs" >[Jan/2025] Ummu :: Zamrud (4 tahun) :: Yuran Sesi 2/1.5 jam - RM 80.00</text><text x="735.8" y="305.0" font-size="6.9" fill="#333" textLength="15.52" lengthAdjust="spacingAndGlyphs" text-anchor="end" >80.00</text><text x="767.4" y="307" font-size="4.9" fill="#fff" textLength="20.9" lengthAdjust="spacingAndGlyphs" text-anchor="middle" >OVERDUE</text><path d="M807.1 303.8 V301.5 H809.4 M813.2 301.5 H815.5 V303.8 M815.5 307.59999999999997 V309.9 H813.2 M809.4 309.9 H807.1 V307.59999999999997" fill="none" stroke="#9a9a9a" stroke-width="0.85"/><path d="M830.4 303.2 H826.5 V310.0 H833.2 V306.2" fill="none" stroke="#a0a0a0" stroke-width="0.85"/><path d="M829.4 306.90000000000003 L834.4 301.90000000000003" stroke="#a0a0a0" stroke-width="0.85"/><path d="M832 301.7 H834.6 V304.3" fill="none" stroke="#a0a0a0" stroke-width="0.85"/><path d="M846.2 302.40000000000003 H853.6" stroke="#f04848" stroke-width="1"/><path d="M848.6 302.2 V301.40000000000003 H851.2 V302.2" fill="none" stroke="#f04848" stroke-width="0.8"/><path d="M846.9 303.2 L847.6 309.40000000000003 H852.2 L852.9 303.2 Z" fill="#fbb0b0" stroke="#f04848" stroke-width="1.1" stroke-linejoin="round"/><rect x="848.7" y="304.2" width="2.4" height="4.2" fill="#f47070"/><path d="M869.1 301.40000000000003 V308.2 M866 305.8 L869.1 308.40000000000003 L872.2 305.8" fill="none" stroke="#fff" stroke-width="1.05"/><path d="M865.6 309.6 H872.6" stroke="#e8e8e8" stroke-width="0.8"/><path d="M884.0 309.6 L884.8000000000001 307.40000000000003 A4.4 4.4 0 1 1 886.3000000000001 308.90000000000003 Z" fill="none" stroke="#fff" stroke-width="1.05" stroke-linejoin="round"/><path d="M886.2 303.5 Q886.4000000000001 307.2 890.3000000000001 307.40000000000003 L890.5 306.3 L889.3000000000001 305.7 L888.7 306.3 Q887.5 305.7 887.1 304.6 L887.7 304.1 L887.2 303.0 Z" fill="#fff"/><rect x="176.4" y="329.25" width="10" height="9.9" rx="1.3" fill="#1f73d6"/><path d="M178.6 334.25 L180.6 336.25 L184.3 332.25" fill="none" stroke="#fff" stroke-width="1.1"/><text x="206" y="331.45" font-size="6.9" fill="#333" textLength="56.64" lengthAdjust="spacingAndGlyphs" >IMB/17062025-9840</text><text x="279.6" y="331.45" font-size="6.9" fill="#333" textLength="60.25" lengthAdjust="spacingAndGlyphs" >17/06/2025 06:06 PM</text><text x="355.6" y="331.45" font-size="6.9" fill="#333" textLength="196.6" lengthAdjust="spacingAndGlyphs" >[Jan/2025] Ummu :: Zamrud (4 tahun) :: Yuran Sesi 1/ 1 jam - RM 50.00</text><text x="735.8" y="331.45" font-size="6.9" fill="#333" textLength="15.52" lengthAdjust="spacingAndGlyphs" text-anchor="end" >50.00</text><text x="767.4" y="334" font-size="4.9" fill="#fff" textLength="20.9" lengthAdjust="spacingAndGlyphs" text-anchor="middle" >OVERDUE</text><path d="M807.1 330.25 V327.95 H809.4 M813.2 327.95 H815.5 V330.25 M815.5 334.04999999999995 V336.34999999999997 H813.2 M809.4 336.34999999999997 H807.1 V334.04999999999995" fill="none" stroke="#9a9a9a" stroke-width="0.85"/><path d="M830.4 329.65 H826.5 V336.45 H833.2 V332.65" fill="none" stroke="#a0a0a0" stroke-width="0.85"/><path d="M829.4 333.35 L834.4 328.35" stroke="#a0a0a0" stroke-width="0.85"/><path d="M832 328.15 H834.6 V330.75" fill="none" stroke="#a0a0a0" stroke-width="0.85"/><path d="M846.2 328.85 H853.6" stroke="#f04848" stroke-width="1"/><path d="M848.6 328.65 V327.85 H851.2 V328.65" fill="none" stroke="#f04848" stroke-width="0.8"/><path d="M846.9 329.65 L847.6 335.85 H852.2 L852.9 329.65 Z" fill="#fbb0b0" stroke="#f04848" stroke-width="1.1" stroke-linejoin="round"/><rect x="848.7" y="330.65" width="2.4" height="4.2" fill="#f47070"/><path d="M869.1 327.85 V334.65 M866 332.25 L869.1 334.85 L872.2 332.25" fill="none" stroke="#fff" stroke-width="1.05"/><path d="M865.6 336.05 H872.6" stroke="#e8e8e8" stroke-width="0.8"/><path d="M884.0 336.05 L884.8000000000001 333.85 A4.4 4.4 0 1 1 886.3000000000001 335.35 Z" fill="none" stroke="#fff" stroke-width="1.05" stroke-linejoin="round"/><path d="M886.2 329.95 Q886.4000000000001 333.65 890.3000000000001 333.85 L890.5 332.75 L889.3000000000001 332.15 L888.7 332.75 Q887.5 332.15 887.1 331.05 L887.7 330.55 L887.2 329.45 Z" fill="#fff"/><rect x="176.4" y="355.70000000000005" width="10" height="9.9" rx="1.3" fill="#1f73d6"/><path d="M178.6 360.70000000000005 L180.6 362.70000000000005 L184.3 358.70000000000005" fill="none" stroke="#fff" stroke-width="1.1"/><text x="206" y="357.90000000000003" font-size="6.9" fill="#333" textLength="55.6" lengthAdjust="spacingAndGlyphs" >IAB/27052025-9759</text><text x="279.6" y="357.90000000000003" font-size="6.9" fill="#333" textLength="60.25" lengthAdjust="spacingAndGlyphs" >27/05/2025 04:06 PM</text><text x="355.6" y="357.90000000000003" font-size="6.9" fill="#333" textLength="246.1" lengthAdjust="spacingAndGlyphs" >[May/2025] Maisarah :: Zamrud (4 tahun) :: Yuran Pendaftaran (Pelajar Baru) - RM 100.00</text><text x="735.8" y="357.90000000000003" font-size="6.9" fill="#333" textLength="18.96" lengthAdjust="spacingAndGlyphs" text-anchor="end" >100.00</text><text x="767.4" y="360" font-size="4.9" fill="#fff" textLength="20.9" lengthAdjust="spacingAndGlyphs" text-anchor="middle" >OVERDUE</text><path d="M807.1 356.70000000000005 V354.40000000000003 H809.4 M813.2 354.40000000000003 H815.5 V356.70000000000005 M815.5 360.5 V362.8 H813.2 M809.4 362.8 H807.1 V360.5" fill="none" stroke="#9a9a9a" stroke-width="0.85"/><path d="M830.4 356.1 H826.5 V362.90000000000003 H833.2 V359.1" fill="none" stroke="#a0a0a0" stroke-width="0.85"/><path d="M829.4 359.80000000000007 L834.4 354.80000000000007" stroke="#a0a0a0" stroke-width="0.85"/><path d="M832 354.6 H834.6 V357.20000000000005" fill="none" stroke="#a0a0a0" stroke-width="0.85"/><path d="M846.2 355.30000000000007 H853.6" stroke="#f04848" stroke-width="1"/><path d="M848.6 355.1 V354.30000000000007 H851.2 V355.1" fill="none" stroke="#f04848" stroke-width="0.8"/><path d="M846.9 356.1 L847.6 362.30000000000007 H852.2 L852.9 356.1 Z" fill="#fbb0b0" stroke="#f04848" stroke-width="1.1" stroke-linejoin="round"/><rect x="848.7" y="357.1" width="2.4" height="4.2" fill="#f47070"/><path d="M869.1 354.30000000000007 V361.1 M866 358.70000000000005 L869.1 361.30000000000007 L872.2 358.70000000000005" fill="none" stroke="#fff" stroke-width="1.05"/><path d="M865.6 362.50000000000006 H872.6" stroke="#e8e8e8" stroke-width="0.8"/><path d="M884.0 362.50000000000006 L884.8000000000001 360.30000000000007 A4.4 4.4 0 1 1 886.3000000000001 361.80000000000007 Z" fill="none" stroke="#fff" stroke-width="1.05" stroke-linejoin="round"/><path d="M886.2 356.40000000000003 Q886.4000000000001 360.1 890.3000000000001 360.30000000000007 L890.5 359.20000000000005 L889.3000000000001 358.6 L888.7 359.20000000000005 Q887.5 358.6 887.1 357.50000000000006 L887.7 357.00000000000006 L887.2 355.90000000000003 Z" fill="#fff"/><rect x="176.4" y="382.15" width="10" height="9.9" rx="1.3" fill="#1f73d6"/><path d="M178.6 387.15 L180.6 389.15 L184.3 385.15" fill="none" stroke="#fff" stroke-width="1.1"/><text x="206" y="384.34999999999997" font-size="6.9" fill="#333" textLength="55.6" lengthAdjust="spacingAndGlyphs" >IYB/27052025-9752</text><text x="279.6" y="384.34999999999997" font-size="6.9" fill="#333" textLength="60.25" lengthAdjust="spacingAndGlyphs" >27/05/2025 03:40 PM</text><text x="355.6" y="384.34999999999997" font-size="6.9" fill="#333" textLength="176.4" lengthAdjust="spacingAndGlyphs" >[Jul/2025] Farid :: Zamrud (4 tahun) :: Yuran Bulanan - RM 50.00</text><text x="735.8" y="384.34999999999997" font-size="6.9" fill="#333" textLength="15.52" lengthAdjust="spacingAndGlyphs" text-anchor="end" >50.00</text><text x="767.4" y="386" font-size="4.9" fill="#fff" textLength="20.9" lengthAdjust="spacingAndGlyphs" text-anchor="middle" >OVERDUE</text><path d="M807.1 383.15 V380.84999999999997 H809.4 M813.2 380.84999999999997 H815.5 V383.15 M815.5 386.94999999999993 V389.24999999999994 H813.2 M809.4 389.24999999999994 H807.1 V386.94999999999993" fill="none" stroke="#9a9a9a" stroke-width="0.85"/><path d="M830.4 382.54999999999995 H826.5 V389.34999999999997 H833.2 V385.54999999999995" fill="none" stroke="#a0a0a0" stroke-width="0.85"/><path d="M829.4 386.25 L834.4 381.25" stroke="#a0a0a0" stroke-width="0.85"/><path d="M832 381.04999999999995 H834.6 V383.65" fill="none" stroke="#a0a0a0" stroke-width="0.85"/><path d="M846.2 381.75 H853.6" stroke="#f04848" stroke-width="1"/><path d="M848.6 381.54999999999995 V380.75 H851.2 V381.54999999999995" fill="none" stroke="#f04848" stroke-width="0.8"/><path d="M846.9 382.54999999999995 L847.6 388.75 H852.2 L852.9 382.54999999999995 Z" fill="#fbb0b0" stroke="#f04848" stroke-width="1.1" stroke-linejoin="round"/><rect x="848.7" y="383.54999999999995" width="2.4" height="4.2" fill="#f47070"/><path d="M869.1 380.75 V387.54999999999995 M866 385.15 L869.1 387.75 L872.2 385.15" fill="none" stroke="#fff" stroke-width="1.05"/><path d="M865.6 388.95 H872.6" stroke="#e8e8e8" stroke-width="0.8"/><path d="M884.0 388.95 L884.8000000000001 386.75 A4.4 4.4 0 1 1 886.3000000000001 388.25 Z" fill="none" stroke="#fff" stroke-width="1.05" stroke-linejoin="round"/><path d="M886.2 382.84999999999997 Q886.4000000000001 386.54999999999995 890.3000000000001 386.75 L890.5 385.65 L889.3000000000001 385.04999999999995 L888.7 385.65 Q887.5 385.04999999999995 887.1 383.95 L887.7 383.45 L887.2 382.34999999999997 Z" fill="#fff"/><rect x="176.4" y="408.6" width="10" height="9.9" rx="1.3" fill="#1f73d6"/><path d="M178.6 413.6 L180.6 415.6 L184.3 411.6" fill="none" stroke="#fff" stroke-width="1.1"/><text x="206" y="410.8" font-size="6.9" fill="#333" textLength="55.6" lengthAdjust="spacingAndGlyphs" >IAB/16052025-9749</text><text x="279.6" y="410.8" font-size="6.9" fill="#333" textLength="59.9" lengthAdjust="spacingAndGlyphs" >16/05/2025 08:55 AM</text><text x="355.6" y="410.8" font-size="6.9" fill="#333" textLength="278.7" lengthAdjust="spacingAndGlyphs" >[May/2025] Farah Binti Mohd Arif :: Zamrud (4 tahun) :: Yuran Pendaftaran (Pelajar Baru) - RM 100.00</text><text x="735.8" y="410.8" font-size="6.9" fill="#333" textLength="18.96" lengthAdjust="spacingAndGlyphs" text-anchor="end" >100.00</text><text x="767.4" y="413" font-size="4.9" fill="#fff" textLength="20.9" lengthAdjust="spacingAndGlyphs" text-anchor="middle" >OVERDUE</text><path d="M807.1 409.6 V407.3 H809.4 M813.2 407.3 H815.5 V409.6 M815.5 413.4 V415.7 H813.2 M809.4 415.7 H807.1 V413.4" fill="none" stroke="#9a9a9a" stroke-width="0.85"/><path d="M830.4 409.0 H826.5 V415.8 H833.2 V412.0" fill="none" stroke="#a0a0a0" stroke-width="0.85"/><path d="M829.4 412.70000000000005 L834.4 407.70000000000005" stroke="#a0a0a0" stroke-width="0.85"/><path d="M832 407.5 H834.6 V410.1" fill="none" stroke="#a0a0a0" stroke-width="0.85"/><path d="M846.2 408.20000000000005 H853.6" stroke="#f04848" stroke-width="1"/><path d="M848.6 408.0 V407.20000000000005 H851.2 V408.0" fill="none" stroke="#f04848" stroke-width="0.8"/><path d="M846.9 409.0 L847.6 415.20000000000005 H852.2 L852.9 409.0 Z" fill="#fbb0b0" stroke="#f04848" stroke-width="1.1" stroke-linejoin="round"/><rect x="848.7" y="410.0" width="2.4" height="4.2" fill="#f47070"/><path d="M869.1 407.20000000000005 V414.0 M866 411.6 L869.1 414.20000000000005 L872.2 411.6" fill="none" stroke="#fff" stroke-width="1.05"/><path d="M865.6 415.40000000000003 H872.6" stroke="#e8e8e8" stroke-width="0.8"/><path d="M884.0 415.40000000000003 L884.8000000000001 413.20000000000005 A4.4 4.4 0 1 1 886.3000000000001 414.70000000000005 Z" fill="none" stroke="#fff" stroke-width="1.05" stroke-linejoin="round"/><path d="M886.2 409.3 Q886.4000000000001 413.0 890.3000000000001 413.20000000000005 L890.5 412.1 L889.3000000000001 411.5 L888.7 412.1 Q887.5 411.5 887.1 410.40000000000003 L887.7 409.90000000000003 L887.2 408.8 Z" fill="#fff"/><text x="708.3" y="440.6" font-size="6.3" fill="#333" textLength="46.7" lengthAdjust="spacingAndGlyphs" >Records per page:</text><text x="762.5" y="441.0" font-size="7.2" fill="#444" textLength="7" lengthAdjust="spacingAndGlyphs" >10</text><path d="M776 437.8 H781 L778.5 440.3 Z" fill="#555"/><text x="792.5" y="440.6" font-size="6.4" fill="#333" textLength="32.5" lengthAdjust="spacingAndGlyphs" >1-10 of 3133</text><path d="M837.5 435.8 V441.6 M843.3 435.8 L840.4 438.7 L843.3 441.6" fill="none" stroke="#6a6a6a" stroke-width="0.9"/><path d="M858 435.8 L855.1 438.7 L858 441.6" fill="none" stroke="#6a6a6a" stroke-width="0.9"/><path d="M871.2 435.8 L874.1 438.7 L871.2 441.6" fill="none" stroke="#6a6a6a" stroke-width="0.9"/><path d="M886.2 435.8 L889.1 438.7 L886.2 441.6 M891.6 435.8 V441.6" fill="none" stroke="#6a6a6a" stroke-width="0.9"/>
</svg>
</body></html>
